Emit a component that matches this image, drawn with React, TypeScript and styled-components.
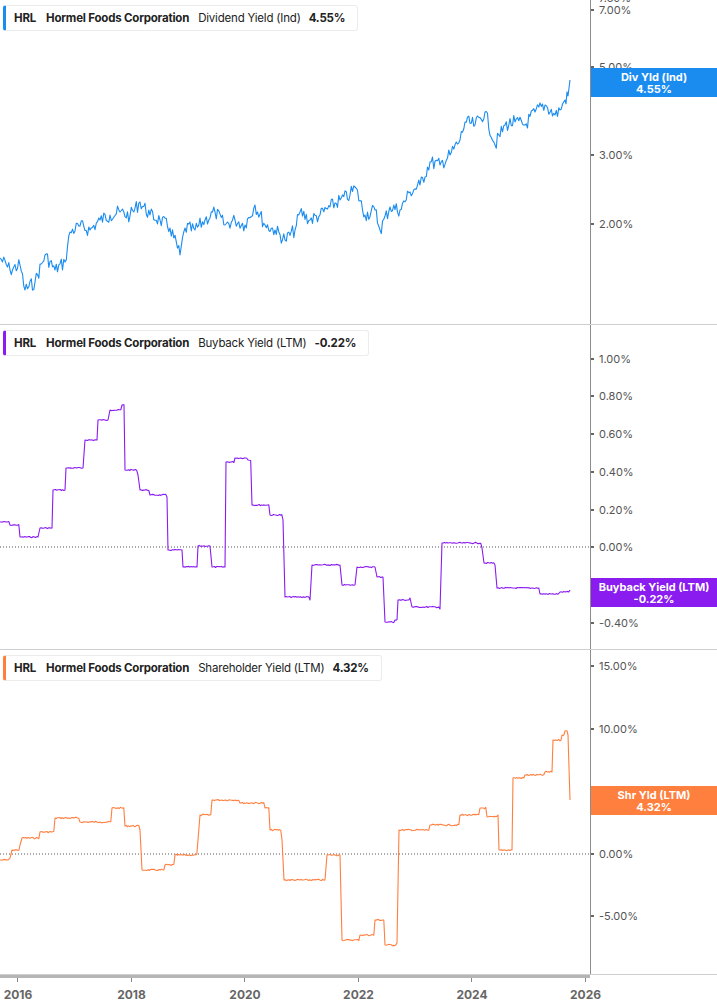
import React from "react";
import styled, { createGlobalStyle } from "styled-components";

type Pt = [number, number];

interface Label {
  text: string;
  y: number;
}

interface PanelDef {
  top: number;
  color: string;
  metric: string;
  value: string;
  badge: string;
  badgeY: number;
  zeroY?: number;
  labels: Label[];
  points: Pt[];
  noise: number;
  step: boolean;
}

const GlobalStyle = createGlobalStyle`
  body { margin: 0; background: #fff; font-family: Inter, "Noto Sans", sans-serif; }
`;

const PANEL_H = 325;
const PLOT_W = 590;

const panels: PanelDef[] = [
  {
    top: 0,
    color: "#1a8cf0",
    metric: "Dividend Yield (Ind)",
    value: "4.55%",
    badge: "Div Yld (Ind)",
    badgeY: 68,
    labels: [
      { text: "7.39%", y: -2 },
      { text: "7.00%", y: 10 },
      { text: "5.00%", y: 67 },
      { text: "3.00%", y: 155 },
      { text: "2.00%", y: 224 },
    ],
    noise: 7,
    step: false,
    points: [
      [0, 258], [10, 270], [20, 265], [25, 290], [35, 282], [45, 255], [55, 270], [65, 262], [70, 232],
      [80, 226], [90, 230], [100, 220], [110, 215], [120, 212], [130, 216], [140, 202], [150, 215],
      [160, 220], [170, 228], [180, 255], [185, 228], [195, 230], [205, 220], [215, 212], [225, 225],
      [235, 220], [245, 225], [255, 205], [265, 225], [275, 230], [285, 240], [295, 230], [300, 212],
      [310, 220], [320, 215], [330, 207], [340, 200], [350, 195], [355, 187], [365, 215], [375, 210],
      [380, 230], [390, 207], [400, 210], [410, 192], [420, 185], [430, 162], [440, 165], [450, 155],
      [460, 140], [465, 122], [475, 125], [485, 112], [495, 145], [505, 125], [515, 122], [525, 125],
      [535, 112], [545, 105], [555, 115], [560, 110], [565, 100], [568, 96], [570, 80],
    ],
  },
  {
    top: 325,
    color: "#8a1cf0",
    metric: "Buyback Yield (LTM)",
    value: "-0.22%",
    badge: "Buyback Yield (LTM)",
    badgeY: 578,
    zeroY: 547,
    labels: [
      { text: "1.00%", y: 359 },
      { text: "0.80%", y: 396 },
      { text: "0.60%", y: 434 },
      { text: "0.40%", y: 472 },
      { text: "0.20%", y: 510 },
      { text: "0.00%", y: 547 },
      { text: "-0.40%", y: 623 },
    ],
    noise: 1.2,
    step: true,
    points: [
      [0, 522], [10, 525], [20, 537], [38, 537], [40, 528], [52, 528], [53, 490], [65, 490], [66, 468],
      [83, 468], [85, 440], [97, 440], [98, 420], [108, 420], [110, 410], [122, 405], [125, 470],
      [138, 475], [140, 490], [150, 495], [167, 497], [168, 550], [182, 550], [183, 567], [197, 567],
      [198, 546], [210, 546], [212, 567], [225, 567], [226, 462], [235, 458], [248, 460], [252, 505],
      [270, 515], [283, 520], [285, 597], [310, 600], [312, 565], [340, 565], [342, 585], [355, 585],
      [357, 567], [375, 567], [377, 577], [383, 577], [385, 622], [395, 620], [398, 600], [410, 598],
      [412, 607], [440, 609], [442, 543], [482, 548], [484, 563], [495, 565], [497, 588], [540, 594],
      [560, 592], [570, 590],
    ],
  },
  {
    top: 650,
    color: "#ff7f3f",
    metric: "Shareholder Yield (LTM)",
    value: "4.32%",
    badge: "Shr Yld (LTM)",
    badgeY: 786,
    zeroY: 854,
    labels: [
      { text: "15.00%", y: 666 },
      { text: "10.00%", y: 729 },
      { text: "5.00%", y: 791 },
      { text: "0.00%", y: 854 },
      { text: "-5.00%", y: 916 },
    ],
    noise: 1.5,
    step: true,
    points: [
      [0, 860], [10, 858], [12, 850], [20, 845], [22, 838], [40, 832], [55, 818], [80, 822], [100, 822],
      [112, 808], [125, 826], [140, 830], [142, 870], [165, 865], [175, 855], [198, 840], [200, 815],
      [212, 800], [240, 803], [265, 808], [270, 830], [282, 840], [284, 880], [325, 880], [327, 855],
      [340, 855], [342, 940], [360, 935], [375, 920], [385, 945], [397, 943], [399, 830], [430, 825],
      [460, 815], [480, 808], [487, 817], [498, 815], [499, 850], [512, 850], [513, 778], [525, 775],
      [545, 772], [552, 772], [553, 740], [562, 735], [565, 731], [568, 735], [570, 800],
    ],
  },
];

// deterministic wiggle between hand-picked points
function wiggle(points: Pt[], amp: number, step: boolean): string {
  const out: string[] = [];
  let seed = 7;
  const rnd = () => {
    seed = (seed * 9301 + 49297) % 233280;
    return seed / 233280 - 0.5;
  };
  for (let i = 0; i < points.length - 1; i++) {
    const [x0, y0] = points[i];
    const [x1, y1] = points[i + 1];
    const n = Math.abs(x1 - x0) < 3 ? 1 : Math.max(1, Math.round((x1 - x0) / 1.2));
    for (let k = 0; k < n; k++) {
      const t = k / n;
      const jitter = k === 0 ? 0 : rnd() * amp * (step ? 1 : 2);
      const y = step ? y0 + jitter : y0 + (y1 - y0) * t + jitter;
      out.push(`${(x0 + (x1 - x0) * t).toFixed(1)},${y.toFixed(1)}`);
    }
  }
  const last = points[points.length - 1];
  out.push(`${last[0]},${last[1]}`);
  return out.join(" ");
}

function Panel({ p }: { p: PanelDef }) {
  return (
    <Row>
      <Plot>
        <Legend $color={p.color}>
          <b>HRL</b>
          <b>Hormel Foods Corporation</b>
          <span>{p.metric}</span>
          <b>{p.value}</b>
        </Legend>
        <svg width={PLOT_W} height={PANEL_H} viewBox={`0 ${p.top} ${PLOT_W} ${PANEL_H}`}>
          {p.zeroY !== undefined && (
            <line x1={0} x2={PLOT_W} y1={p.zeroY} y2={p.zeroY} stroke="#555" strokeWidth={1} strokeDasharray="1 2" />
          )}
          <polyline points={wiggle(p.points, p.noise, p.step)} fill="none" stroke={p.color} strokeWidth={1.1} strokeLinejoin="round" />
        </svg>
      </Plot>
      <Axis>
        {p.labels.map((l) => (
          <Tick key={l.text} style={{ top: l.y - p.top - 7 }}>
            {l.text}
          </Tick>
        ))}
        <Badge $color={p.color} style={{ top: p.badgeY - p.top }}>
          <span>{p.badge}</span>
          <span>{p.value}</span>
        </Badge>
      </Axis>
    </Row>
  );
}

const years = ["2016", "2018", "2020", "2022", "2024", "2026"];

export default function App() {
  return (
    <Page>
      <GlobalStyle />
      {panels.map((p) => (
        <Panel key={p.top} p={p} />
      ))}
      <XAxis>
        {years.map((y, i) => (
          <Year key={y} style={{ left: i * 113.5 }}>
            {y}
          </Year>
        ))}
      </XAxis>
    </Page>
  );
}

const Page = styled.div`
  width: 717px;
  height: 1005px;
  overflow: hidden;
  background: #fff;
`;

const Row = styled.div`
  display: flex;
  height: ${PANEL_H}px;
  border-bottom: 1px solid #cfcfcf;
  box-sizing: border-box;
  &:nth-child(4) {
    border-bottom: none;
  }
`;

const Plot = styled.div`
  position: relative;
  width: ${PLOT_W}px;
  border-right: 1px solid #8c8c8c;
  overflow: hidden;
  svg {
    display: block;
  }
`;

const Legend = styled.div<{ $color: string }>`
  position: absolute;
  top: 5px;
  left: 3px;
  display: flex;
  gap: 8px;
  align-items: center;
  height: 24px;
  padding: 0 12px 0 8px;
  background: #fff;
  border: 1px solid #ececec;
  border-left: 3px solid ${(p) => p.$color};
  border-radius: 3px;
  font-size: 11.5px;
  letter-spacing: -0.2px;
  color: #222;
  b {
    font-weight: 700;
  }
  b:nth-child(2) {
    margin-left: 2px;
  }
  span {
    margin-left: 1px;
  }
`;

const Axis = styled.div`
  position: relative;
  flex: 1;
`;

const Tick = styled.div`
  position: absolute;
  left: 0;
  padding-left: 8px;
  font-size: 11px;
  color: #555;
  line-height: 14px;
  &::before {
    content: "";
    position: absolute;
    left: 0;
    top: 6px;
    width: 3px;
    height: 2px;
    background: #666;
  }
`;

const Badge = styled.div<{ $color: string }>`
  position: absolute;
  left: 0;
  right: 0;
  height: 29px;
  background: ${(p) => p.$color};
  color: #fff;
  font-size: 11px;
  font-weight: 700;
  line-height: 12px;
  display: flex;
  flex-direction: column;
  align-items: center;
  justify-content: center;
`;

const XAxis = styled.div`
  position: relative;
  width: ${PLOT_W}px;
  height: 31px;
  border-top: 3px solid #b5b5b5;
  box-sizing: border-box;
`;

const Year = styled.div`
  position: absolute;
  top: 9px;
  width: 36px;
  text-align: center;
  font-size: 12px;
  font-weight: 700;
  color: #666;
  &::before {
    content: "";
    position: absolute;
    left: 17px;
    top: -9px;
    width: 1px;
    height: 4px;
    background: #888;
  }
`;
